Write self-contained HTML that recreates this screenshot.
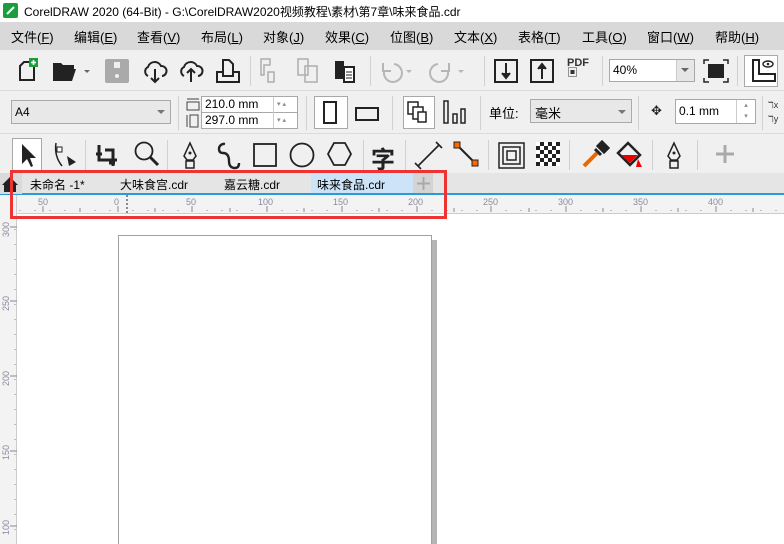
<!DOCTYPE html><html><head><meta charset="utf-8"><style>
*{margin:0;padding:0;box-sizing:border-box}
html,body{width:784px;height:544px;overflow:hidden}
body{background:#fff;font-family:"Liberation Sans","Noto Sans CJK SC",sans-serif;position:relative;font-size:12px;color:#000}
.a{position:absolute}
.menu span{position:absolute;top:27px;font-size:13px}
.sep{position:absolute;width:1px;background:#d0d0d0}
.box{position:absolute;background:#fff;border:1px solid #a8a8a8}
svg{position:absolute;overflow:visible}
.rn{position:absolute;top:197px;font-size:9px;color:#8a8aa0}
.vn{position:absolute;left:1px;font-size:9px;color:#8a8aa0;transform:rotate(-90deg);transform-origin:left top}
</style></head><body>
<div class="a" style="left:0;top:0;width:784px;height:22px;background:#fff"></div>
<div class="a" style="left:3px;top:3px;width:15px;height:15px;background:#1a9e3c;border-radius:2px"></div>
<svg style="left:3px;top:3px" width="15" height="15"><path d="M4 11 L11 4" stroke="#fff" stroke-width="2"/></svg>
<div class="a" style="left:24px;top:3px;font-size:12px">CorelDRAW 2020 (64-Bit) - G:\CorelDRAW2020视频教程\素材\第7章\味来食品.cdr</div>
<div class="a menu" style="left:0;top:22px;width:784px;height:28px;background:#d9d9d9">
<span style="left:11px;top:5px">文件(<u>F</u>)</span><span style="left:74px;top:5px">编辑(<u>E</u>)</span><span style="left:137px;top:5px">查看(<u>V</u>)</span><span style="left:201px;top:5px">布局(<u>L</u>)</span><span style="left:263px;top:5px">对象(<u>J</u>)</span><span style="left:325px;top:5px">效果(<u>C</u>)</span><span style="left:390px;top:5px">位图(<u>B</u>)</span><span style="left:454px;top:5px">文本(<u>X</u>)</span><span style="left:518px;top:5px">表格(<u>T</u>)</span><span style="left:582px;top:5px">工具(<u>O</u>)</span><span style="left:647px;top:5px">窗口(<u>W</u>)</span><span style="left:715px;top:5px">帮助(<u>H</u>)</span>
</div>
<div class="a" style="left:0;top:50px;width:784px;height:123px;background:#f0f0f0"></div>
<div class="a" style="left:0;top:90px;width:784px;height:1px;background:#dcdcdc"></div>
<div class="a" style="left:0;top:133px;width:784px;height:1px;background:#dcdcdc"></div>
<svg style="left:14px;top:58px" width="28" height="26"><path d="M6 8 L10 4 H20 V22 H6 Z" fill="none" stroke="#222" stroke-width="2"/><rect x="15" y="0" width="9" height="9" fill="#1a9e3c"/><path d="M19.5 2v5M17 4.5h5" stroke="#fff" stroke-width="1.6"/></svg>
<svg style="left:52px;top:60px" width="40" height="24"><path d="M1 3h8l2 2h11v4H6L2 21H1Z M6 9h18l-4 12H2Z" fill="#222"/><path d="M32 10l3 3 3-3z" fill="#666"/></svg>
<svg style="left:105px;top:59px" width="24" height="24"><rect x="0" y="0" width="24" height="24" rx="2" fill="#aaa"/><rect x="9" y="3" width="6" height="6" fill="#f0f0f0"/><circle cx="12" cy="17" r="2" fill="#f0f0f0"/></svg>
<svg style="left:142px;top:58px" width="26" height="26"><path d="M6 18 A5 5 0 0 1 6 9 A7 7 0 0 1 19 8 A5 5 0 0 1 20 18" fill="none" stroke="#222" stroke-width="2"/><path d="M13 11V24M9 20l4 4 4-4" fill="none" stroke="#222" stroke-width="2"/></svg>
<svg style="left:178px;top:58px" width="26" height="26"><path d="M6 18 A5 5 0 0 1 6 9 A7 7 0 0 1 19 8 A5 5 0 0 1 20 18" fill="none" stroke="#222" stroke-width="2"/><path d="M13 24V11M9 15l4-4 4 4" fill="none" stroke="#222" stroke-width="2"/></svg>
<svg style="left:216px;top:58px" width="24" height="26"><path d="M1 14V24H23V14H17V18H7V14ZM7 18V2H13L17 6V18" fill="none" stroke="#222" stroke-width="2"/></svg>
<div class="sep" style="left:250px;top:56px;height:30px"></div>
<svg style="left:260px;top:58px" width="26" height="26" opacity=".35"><path d="M1 1h9v6H4v10H1ZM8 14h6v10H8z" fill="none" stroke="#333" stroke-width="1.5"/></svg>
<svg style="left:297px;top:58px" width="26" height="26" opacity=".35"><path d="M1 1h10v16H1ZM8 8h12v16H8z" fill="none" stroke="#333" stroke-width="1.5"/></svg>
<svg style="left:334px;top:58px" width="26" height="26"><rect x="1" y="3" width="9" height="18" fill="#222"/><rect x="10" y="9" width="10" height="15" fill="#fff" stroke="#222" stroke-width="2"/><path d="M12 14h6M12 17h6M12 20h6" stroke="#222"/></svg>
<div class="sep" style="left:370px;top:56px;height:30px"></div>
<svg style="left:378px;top:58px" width="40" height="26" opacity=".3"><path d="M16 6A9 9 0 1 1 6 14M5 5v8h8" fill="none" stroke="#333" stroke-width="2"/><path d="M28 12l3 3 3-3z" fill="#333"/></svg>
<svg style="left:430px;top:58px" width="40" height="26" opacity=".3"><path d="M8 6A9 9 0 1 0 18 14M19 5v8h-8" fill="none" stroke="#333" stroke-width="2"/><path d="M28 12l3 3 3-3z" fill="#333"/></svg>
<div class="sep" style="left:484px;top:56px;height:30px"></div>
<svg style="left:494px;top:58px" width="26" height="26"><rect x="1" y="2" width="22" height="22" fill="none" stroke="#222" stroke-width="2"/><path d="M12 5V19M8 15l4 5 4-5" fill="#222" stroke="#222" stroke-width="2"/></svg>
<svg style="left:530px;top:58px" width="26" height="26"><rect x="1" y="2" width="22" height="22" fill="none" stroke="#222" stroke-width="2"/><path d="M12 21V8M8 11l4-5 4 5" fill="#222" stroke="#222" stroke-width="2"/></svg>
<div class="a" style="left:567px;top:58px;font-size:11px;line-height:10px;font-weight:bold;color:#333">PDF<br>▣</div>
<div class="sep" style="left:602px;top:56px;height:30px"></div>
<div class="box" style="left:609px;top:59px;width:86px;height:23px"></div>
<div class="a" style="left:613px;top:63px;font-size:12px">40%</div>
<div class="a" style="left:676px;top:60px;width:18px;height:21px;background:#e6e6e6;border-left:1px solid #ccc"></div>
<svg style="left:681px;top:68px" width="8" height="5"><path d="M0 0h8l-4 4z" fill="#666"/></svg>
<svg style="left:703px;top:58px" width="26" height="26"><rect x="5" y="6" width="16" height="14" fill="#222"/><path d="M1 6V2h5M20 2h5v4M25 20v4h-5M6 24H1v-4" fill="none" stroke="#222" stroke-width="1.5"/></svg>
<div class="sep" style="left:737px;top:56px;height:30px"></div>
<div class="box" style="left:744px;top:55px;width:34px;height:32px;border-color:#aaa"></div>
<svg style="left:751px;top:59px" width="26" height="24"><path d="M2 1V22H24V15H8V1Z" fill="none" stroke="#222" stroke-width="2"/><ellipse cx="17" cy="5" rx="5" ry="3" fill="none" stroke="#222" stroke-width="1.4"/><circle cx="17" cy="5" r="1.3" fill="#222"/></svg>
<div class="a" style="left:11px;top:100px;width:160px;height:24px;background:#e8e8e8;border:1px solid #aaa"></div>
<div class="a" style="left:15px;top:105px;font-size:12px">A4</div>
<svg style="left:157px;top:110px" width="8" height="5"><path d="M0 0h8l-4 4z" fill="#777"/></svg>
<div class="sep" style="left:178px;top:96px;height:34px"></div>
<svg style="left:186px;top:97px" width="14" height="32"><path d="M1 2h12M1 5h12v8H1zM1 18v12M4 18h8v12H4z" fill="none" stroke="#444" stroke-width="1"/></svg>
<div class="box" style="left:201px;top:96px;width:97px;height:17px"></div>
<div class="box" style="left:201px;top:112px;width:97px;height:17px"></div>
<div class="a" style="left:205px;top:97px;font-size:12px">210.0 mm</div>
<div class="a" style="left:205px;top:113px;font-size:12px">297.0 mm</div>
<div class="a" style="left:273px;top:97px;width:24px;height:31px;border-left:1px solid #ccc;color:#888;font-size:7px;line-height:16px;padding-left:3px">▾ ▴<br>▾ ▴</div>
<div class="sep" style="left:306px;top:96px;height:34px"></div>
<div class="box" style="left:314px;top:96px;width:34px;height:33px"></div>
<div class="a" style="left:323px;top:101px;width:14px;height:23px;border:2px solid #222"></div>
<div class="a" style="left:355px;top:107px;width:24px;height:14px;border:2px solid #222"></div>
<div class="sep" style="left:392px;top:96px;height:34px"></div>
<div class="box" style="left:403px;top:96px;width:32px;height:33px"></div>
<svg style="left:406px;top:101px" width="26" height="24"><rect x="2" y="1" width="10" height="12" fill="none" stroke="#222" stroke-width="1.5"/><rect x="7" y="6" width="10" height="12" fill="#fff" stroke="#222" stroke-width="1.5"/><rect x="12" y="11" width="8" height="10" fill="#fff" stroke="#222" stroke-width="1.5"/></svg>
<svg style="left:442px;top:100px" width="26" height="26"><rect x="2" y="1" width="4" height="22" fill="none" stroke="#222" stroke-width="1.5"/><rect x="11" y="14" width="4" height="9" fill="none" stroke="#222" stroke-width="1.5"/><rect x="19" y="9" width="4" height="14" fill="none" stroke="#222" stroke-width="1.5"/></svg>
<div class="sep" style="left:480px;top:96px;height:34px"></div>
<div class="a" style="left:489px;top:103px;font-size:13px">单位:</div>
<div class="a" style="left:530px;top:99px;width:102px;height:24px;background:#e8e8e8;border:1px solid #aaa"></div>
<div class="a" style="left:535px;top:103px;font-size:13px">毫米</div>
<svg style="left:618px;top:110px" width="8" height="5"><path d="M0 0h8l-4 4z" fill="#777"/></svg>
<div class="sep" style="left:638px;top:96px;height:34px"></div>
<div class="a" style="left:651px;top:103px;font-size:13px;color:#222">✥</div>
<div class="box" style="left:675px;top:99px;width:81px;height:25px"></div>
<div class="a" style="left:679px;top:104px;font-size:12px">0.1 mm</div>
<div class="a" style="left:736px;top:100px;width:19px;height:23px;border-left:1px solid #ccc;color:#888;font-size:7px;line-height:11px;text-align:center">▴<br>▾</div>
<div class="sep" style="left:762px;top:96px;height:34px"></div>
<div class="a" style="left:768px;top:98px;font-size:9px;color:#333;line-height:14px">ℸx<br>ℸy</div>
<div class="box" style="left:12px;top:138px;width:30px;height:33px"></div>
<svg style="left:20px;top:143px" width="20" height="26"><path d="M2 1V21L7 16L11 24L13 23L10 15H16Z" fill="#222"/></svg>
<svg style="left:52px;top:142px" width="28" height="28"><rect x="5" y="5" width="5" height="5" fill="#fff" stroke="#222"/><path d="M4 1Q2 14 10 24" fill="none" stroke="#222" stroke-width="1.5"/><path d="M15 14L24 20L17 24Z" fill="#222"/></svg>
<div class="sep" style="left:85px;top:140px;height:30px"></div>
<svg style="left:95px;top:142px" width="28" height="28"><path d="M4 3V18H22M10 8H18V24M1 12H7M14 21H20" fill="none" stroke="#222" stroke-width="3"/></svg>
<svg style="left:133px;top:140px" width="30" height="30"><circle cx="11" cy="11" r="8.5" fill="none" stroke="#222" stroke-width="1.8"/><path d="M17 17L25 25" stroke="#222" stroke-width="3"/></svg>
<div class="sep" style="left:167px;top:140px;height:30px"></div>
<svg style="left:180px;top:142px" width="22" height="28"><path d="M10 1L4 14L7 18H13L16 14Z" fill="none" stroke="#222" stroke-width="1.5"/><circle cx="10" cy="11" r="1.5" fill="#222"/><rect x="6" y="19" width="8" height="7" fill="none" stroke="#222" stroke-width="1.5"/></svg>
<svg style="left:215px;top:141px" width="28" height="30"><path d="M10 3A5 5 0 0 0 4 8Q4 12 8 12Q14 12 14 20Q14 27 20 27Q24 27 24 22" fill="none" stroke="#222" stroke-width="2.4"/></svg>
<svg style="left:252px;top:142px" width="28" height="28"><rect x="2" y="2" width="22" height="22" fill="none" stroke="#222" stroke-width="1.8"/></svg>
<svg style="left:289px;top:142px" width="28" height="28"><circle cx="13" cy="13" r="11.5" fill="none" stroke="#222" stroke-width="1.8"/></svg>
<svg style="left:326px;top:141px" width="28" height="28"><path d="M8 2H19L25 13L19 24H8L2 13Z" fill="none" stroke="#222" stroke-width="1.8"/></svg>
<div class="sep" style="left:363px;top:140px;height:30px"></div>
<div class="a" style="left:371px;top:140px;font-size:24px;font-weight:bold;color:#222">字</div>
<div class="sep" style="left:405px;top:140px;height:30px"></div>
<svg style="left:415px;top:142px" width="30" height="28"><path d="M3 24L24 3M0 21L6 27M21 0L27 6" stroke="#222" stroke-width="1.6"/></svg>
<svg style="left:453px;top:141px" width="30" height="30"><path d="M5 5L23 23" stroke="#222" stroke-width="2"/><rect x="1" y="1" width="6" height="6" fill="#f60" stroke="#222"/><rect x="19" y="19" width="6" height="6" fill="#f60" stroke="#222"/></svg>
<div class="sep" style="left:488px;top:140px;height:30px"></div>
<svg style="left:498px;top:142px" width="28" height="28"><rect x="1" y="1" width="25" height="25" fill="none" stroke="#222" stroke-width="1.5"/><rect x="5" y="5" width="17" height="17" fill="none" stroke="#222" stroke-width="1.5"/><rect x="9" y="9" width="9" height="9" fill="none" stroke="#222" stroke-width="1.5"/></svg>
<svg style="left:536px;top:142px" width="24" height="24"><rect width="24" height="24" fill="#222"/><path d="M0 0h4v4H0zM8 0h4v4H8zM16 0h4v4h-4zM4 4h4v4H4zM12 4h4v4h-4zM20 4h4v4h-4zM0 8h4v4H0zM8 8h4v4H8zM16 8h4v4h-4zM4 12h4v4H4zM12 12h4v4h-4zM20 12h4v4h-4zM0 16h4v4H0zM8 16h4v4H8zM16 16h4v4h-4zM4 20h4v4H4zM12 20h4v4h-4zM20 20h4v4h-4z" fill="#fff"/></svg>
<div class="sep" style="left:569px;top:140px;height:30px"></div>
<svg style="left:580px;top:141px" width="30" height="30"><path d="M4 25L17 12" stroke="#e60" stroke-width="4"/><path d="M15 8L21 14M18 5L22 1L28 7L24 11Z" stroke="#222" stroke-width="3" fill="#222"/></svg>
<svg style="left:616px;top:141px" width="30" height="30"><path d="M12 2L24 14L14 24L2 12Z" fill="none" stroke="#222" stroke-width="2.5"/><path d="M5 14H22L14 22Z" fill="#e00"/><path d="M22 18L26 26H20Z" fill="#e00"/></svg>
<div class="sep" style="left:652px;top:140px;height:30px"></div>
<svg style="left:664px;top:142px" width="22" height="28"><path d="M10 1L4 14L7 18H13L16 14Z" fill="none" stroke="#222" stroke-width="1.5"/><circle cx="10" cy="11" r="1.5" fill="#222"/><rect x="6" y="19" width="8" height="7" fill="none" stroke="#222" stroke-width="1.5"/></svg>
<div class="sep" style="left:697px;top:140px;height:30px"></div>
<svg style="left:716px;top:145px" width="20" height="20"><path d="M9 0V18M0 9H18" stroke="#aaa" stroke-width="3"/></svg>
<div class="a" style="left:0;top:173px;width:784px;height:21px;background:#e5e5e5"></div>
<div class="a" style="left:0;top:193px;width:784px;height:2px;background:#2b9ad9"></div>
<div class="a" style="left:0;top:173px;width:22px;height:21px;background:#dadada"></div>
<svg style="left:2px;top:177px" width="16" height="15"><path d="M0 8L8 0L16 8H14V15H2V8Z" fill="#222"/></svg>
<div class="a" style="left:30px;top:176px;font-size:12px">未命名 -1*</div>
<div class="a" style="left:120px;top:176px;font-size:12px">大味食宫.cdr</div>
<div class="a" style="left:224px;top:176px;font-size:12px">嘉云糖.cdr</div>
<div class="a" style="left:311px;top:173px;width:102px;height:20px;background:#cde4f8"></div>
<div class="a" style="left:317px;top:176px;font-size:12px">味来食品.cdr</div>
<div class="a" style="left:413px;top:173px;width:20px;height:20px;background:#d4d4d4"></div>
<svg style="left:417px;top:177px" width="13" height="13"><path d="M6.5 0V13M0 6.5H13" stroke="#aaa" stroke-width="2"/></svg>
<div class="a" style="left:0;top:195px;width:784px;height:19px;background:#f3f3f3;border-bottom:1px solid #ccc"></div>
<div class="a" style="left:0;top:195px;width:17px;height:349px;background:#f3f3f3;border-right:1px solid #ccc"></div>
<svg style="left:0;top:195px" width="784" height="19"><g stroke="#888"><path d="M20 15v1M35 15v1M50 15v1M65 15v1M80 15v1M95 15v1M110 15v1M133 15v1M148 15v1M163 15v1M178 15v1M207 15v1M222 15v1M237 15v1M252 15v1M282 15v1M297 15v1M312 15v1M327 15v1M357 15v1M372 15v1M387 15v1M402 15v1M432 15v1M447 15v1M462 15v1M477 15v1M506 15v1M521 15v1M536 15v1M551 15v1M581 15v1M596 15v1M611 15v1M626 15v1M656 15v1M671 15v1M686 15v1M701 15v1M731 15v1M746 15v1M761 15v1M776 15v1"/><path d="M43 11v6M118 11v6M192 11v6M267 11v6M342 11v6M417 11v6M491 11v6M566 11v6M641 11v6M716 11v6M80 13v4M155 13v4M230 13v4M304 13v4M379 13v4M454 13v4M529 13v4M603 13v4M678 13v4M753 13v4"/></g><path d="M127 0v19" stroke="#222" stroke-dasharray="2 2"/></svg>
<div class="rn" style="left:38px">50</div><div class="rn" style="left:114px">0</div><div class="rn" style="left:186px">50</div><div class="rn" style="left:258px">100</div><div class="rn" style="left:333px">150</div><div class="rn" style="left:408px">200</div><div class="rn" style="left:483px">250</div><div class="rn" style="left:558px">300</div><div class="rn" style="left:633px">350</div><div class="rn" style="left:708px">400</div>
<svg style="left:0;top:214px" width="17" height="330"><g stroke="#888"><path d="M15 15v1M15 30v1M15 45v1M15 60v1M15 75v1M15 90v1M15 105v1M15 120v1M15 135v1M15 150v1M15 165v1M15 180v1M15 195v1M15 210v1M15 225v1M15 240v1M15 255v1M15 270v1M15 285v1M15 300v1M15 315v1"/><path d="M10 13h7M10 87h7M10 162h7M10 237h7M10 312h7"/></g></svg>
<div class="vn" style="top:237px">300</div><div class="vn" style="top:311px">250</div><div class="vn" style="top:386px">200</div><div class="vn" style="top:460px">150</div><div class="vn" style="top:535px">100</div>
<div class="a" style="left:431px;top:240px;width:6px;height:304px;background:#b4b4b4"></div>
<div class="a" style="left:118px;top:235px;width:314px;height:309px;background:#fff;border:1px solid #a0a0a0;border-bottom:none"></div>
<div class="a" style="left:10px;top:170px;width:437px;height:49px;border:3px solid #ee3333"></div>
</body></html>
